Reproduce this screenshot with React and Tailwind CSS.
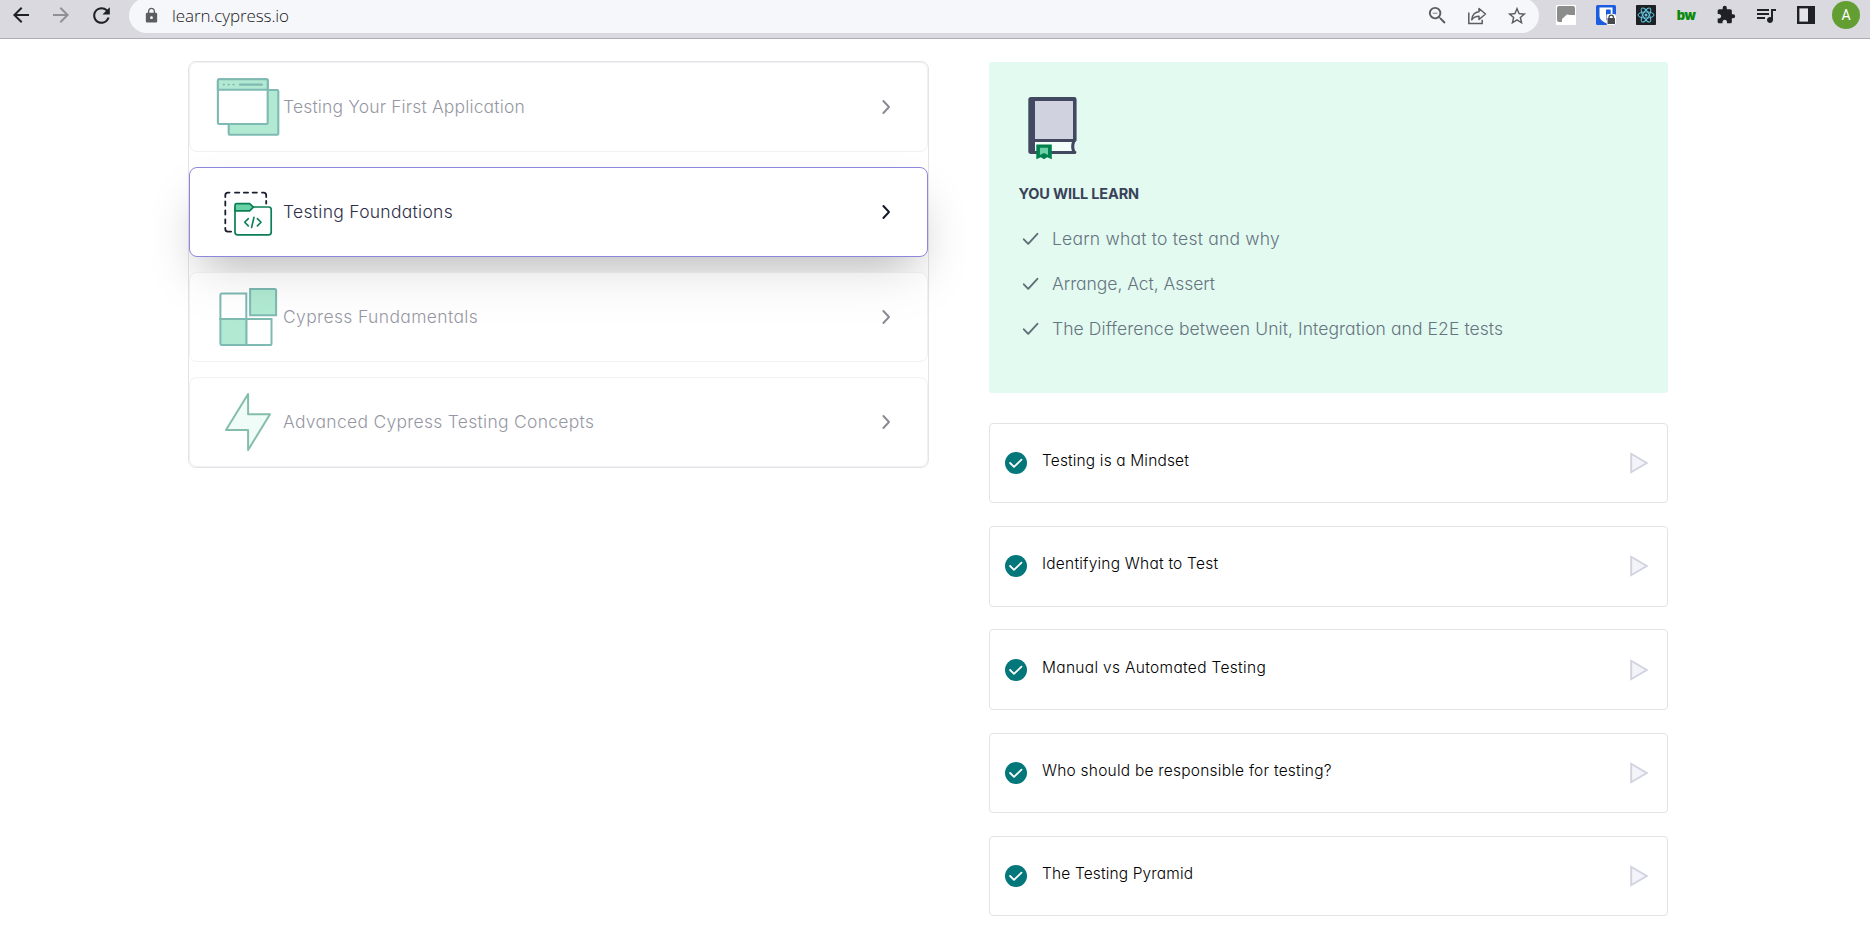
import {
  MdArrowBack,
  MdArrowForward,
  MdExtension,
  MdLock,
  MdQueueMusic,
  MdRefresh,
  MdStarBorder,
  MdZoomOut,
} from "react-icons/md";

const WindowsIcon = () => (
  <svg viewBox="213 63 70 88" className="h-[88px] w-[70px] shrink-0" fill="#65d5a7" stroke="#007769" strokeWidth="2.1">
    <rect x="228.7" y="90" width="49.6" height="44.8" rx="1.2" />
    <rect x="217.9" y="79.2" width="49.8" height="44.8" rx="1.2" fill="#fff" />
    <path d="M217.9 89.8V80.4a1.2 1.2 0 0 1 1.2-1.2h47.4a1.2 1.2 0 0 1 1.2 1.2v9.4Z" />
    <path d="M239.8 84.6H262" strokeLinecap="round" />
    <path d="M223.4 84.6h.8M228.3 84.6h.8M233.2 84.6h.8" strokeLinecap="round" strokeWidth="1.6" />
  </svg>
);

const FolderIcon = () => (
  <svg viewBox="213 168 70 88" className="h-[88px] w-[70px] shrink-0" fill="none" strokeLinecap="round" strokeLinejoin="round">
    <g stroke="#1b1e2e" strokeWidth="1.8">
      <path d="M225.3 197v-1.8a2.6 2.6 0 0 1 2.6-2.6h1.6M235 192.6h4.3M243.8 192.6h4.3M252.6 192.6h4.3M262 192.6h1.6a2.6 2.6 0 0 1 2.6 2.6v1.8M266.2 201v2.6" />
      <path d="M225.3 201.5v4M225.3 210.5v4M225.3 219.3v4M225.3 227.8v1.2a2.6 2.6 0 0 0 2.6 2.6h3.2" />
    </g>
    <g stroke="#0b7f55" strokeWidth="1.7">
      <path d="M235 208v24.2a2.6 2.6 0 0 0 2.6 2.6h31a2.6 2.6 0 0 0 2.6-2.6v-22.6a2.6 2.6 0 0 0-2.6-2.6h-15" fill="#fff" />
      <path d="M235 210.8v-5.6a1.6 1.6 0 0 1 1.6-1.6h13l3.8 3.5-3.8 3.7Z" fill="#69d3a7" />
      <path d="m248.3 218.6-3.6 3.7 3.6 3.6M257.4 218.6l3.6 3.7-3.6 3.6M254 217.2l-2.4 10.3" strokeWidth="1.6" />
    </g>
  </svg>
);

const BlocksIcon = () => (
  <svg viewBox="213 273 70 88" className="h-[88px] w-[70px] shrink-0" fill="#fff" stroke="#007769" strokeWidth="2">
    <path d="M220.4 319v-24.2a1.3 1.3 0 0 1 1.3-1.3h24.6V319Z" />
    <path d="M246.3 319h25.2v24.8a1.3 1.3 0 0 1-1.3 1.3h-23.9Z" />
    <path d="M220.4 319h25.9v26.1h-24.6a1.3 1.3 0 0 1-1.3-1.3Z" fill="#65d5a7" />
    <path d="M250.1 289h24.7a1.3 1.3 0 0 1 1.3 1.3v24.9h-26Z" fill="#65d5a7" />
  </svg>
);

const BoltIcon = () => (
  <svg viewBox="213 378 70 88" className="h-[88px] w-[70px] shrink-0" fill="#e3fbf0" stroke="#0b7f55" strokeWidth="2" strokeLinejoin="round">
    <path d="M248.1 394v20.2H270l-21.9 35.9V430H226Z" />
  </svg>
);

const Chevron = () => (
  <svg viewBox="0 0 10 16" className="mr-[36px] h-4 w-[10px]" fill="none" stroke="#14172a" strokeWidth="1.9">
    <path d="m2.4 2 5.6 6-5.6 6" strokeLinecap="round" strokeLinejoin="round" />
  </svg>
);

const BookIcon = () => (
  <svg viewBox="1019 92 72 72" className="h-[72px] w-[72px]">
    <path d="M1031 97h43.2a2.4 2.4 0 0 1 2.4 2.4v41.2l-1.6 2c-1 2.6-1 5.2 0 7.9l1.6 1.5-1 2H1031a2.7 2.7 0 0 1-2.7-2.7V99.7A2.7 2.7 0 0 1 1031 97Z" fill="#434861" />
    <path d="M1035 101h38v37.9h-38Z" fill="#d0d2e0" />
    <path d="M1035 142h36.9c-1 3-1 6 0 8.9H1035Z" fill="#f3fdf9" />
    <path d="M1036.3 144.4h15.5v14.8l-4.6-1.9-3.2 1.9-3.2-1.9-4.5 1.9Z" fill="#00814d" />
    <path d="M1039.9 147.8h8.1v7.2l-4-1.9-4.1 1.9Z" fill="#69d3a7" />
  </svg>
);

const DoneBadge = () => (
  <svg viewBox="0 0 22 22" className="h-[22px] w-[22px] shrink-0" fill="none">
    <circle cx="11" cy="11" r="11" fill="#04777b" />
    <path d="m5.1 11 3.9 3.8 7.5-7.2" stroke="#fff" strokeWidth="1.8" strokeLinecap="round" strokeLinejoin="round" />
  </svg>
);

const Play = () => (
  <svg viewBox="0 0 20 22" className="mr-[18px] h-[22px] w-5" fill="#f3f4fa" stroke="#d0d2e0" strokeWidth="1.9">
    <path d="M2.2 1.8v18.4L17.8 11Z" />
  </svg>
);

const courses = [
  { title: "Testing Your First Application", Icon: WindowsIcon, tracking: "tracking-[0.15px]" },
  { title: "Testing Foundations", Icon: FolderIcon, tracking: "tracking-[0.28px]", active: true },
  { title: "Cypress Fundamentals", Icon: BlocksIcon, tracking: "tracking-[0.36px]" },
  { title: "Advanced Cypress Testing Concepts", Icon: BoltIcon, tracking: "tracking-[0.28px]" },
];

const goals = [
  { text: "Learn what to test and why", tracking: "tracking-[0.21px]" },
  { text: "Arrange, Act, Assert", tracking: "tracking-[-0.047px]" },
  { text: "The Difference between Unit, Integration and E2E tests", tracking: "tracking-[0.077px]" },
];

const lessons = [
  { title: "Testing is a Mindset", tracking: "tracking-[0.147px]" },
  { title: "Identifying What to Test", tracking: "tracking-[0.225px]" },
  { title: "Manual vs Automated Testing", tracking: "tracking-[0.32px]" },
  { title: "Who should be responsible for testing?", tracking: "tracking-[0.23px]" },
  { title: "The Testing Pyramid", tracking: "tracking-[0.139px]" },
];

const Slot = ({ children }) => <div className="flex h-[30px] w-10 shrink-0 items-center justify-center">{children}</div>;

function Toolbar() {
  return (
    <header className="flex h-[39px] items-start border-b border-[#aeadb6] bg-[#d9d9df] text-[#1f2127]">
      <div className="flex w-[129px] shrink-0 pl-[1px]">
        <Slot><MdArrowBack size={24} /></Slot>
        <Slot><MdArrowForward size={24} color="#8f9096" /></Slot>
        <Slot><MdRefresh size={25} /></Slot>
      </div>
      <div className="-mt-0.5 flex h-[35px] w-[1410px] shrink-0 items-center rounded-full bg-[#f6f7fa] pr-[2px] pl-[14px]">
        <MdLock size={17} color="#5c5d62" />
        <div className="ml-[12px] flex-1 font-['Open_Sans',sans-serif] text-[17px] leading-6 font-light tracking-[-0.1px] text-[#16181d]">
          learn.cypress.io
        </div>
        <div className="flex text-[#5c5d62]">
          <Slot><MdZoomOut size={23} /></Slot>
          <Slot>
            <svg viewBox="0 0 20 18" className="h-[18px] w-5" fill="none" stroke="currentColor" strokeWidth="1.5">
              <path d="M1.8 5.5v11h13.4v-3.8" />
              <path d="M12 1.5v3.3c-4.3.4-6.8 3.4-7.3 8 1.9-2.6 4.1-3.6 7.3-3.6v3.3L18.5 7Z" strokeLinejoin="round" />
            </svg>
          </Slot>
          <Slot><MdStarBorder size={22} /></Slot>
        </div>
      </div>
      <div className="flex pl-[7px]">
        <Slot>
          <svg viewBox="0 0 20 20" className="h-5 w-5">
            <rect width="20" height="20" rx="1" fill="#fff" />
            <path d="M3 1h14a2 2 0 0 1 2 2v7h-4.500L11 9.500 6 14v3H3a2 2 0 0 1-2-2V3a2 2 0 0 1 2-2Z" fill="#8b8c8c" />
            <path d="m6 14.5 5.500-5v2H18V19H8v-2.800Z" fill="#fff" />
          </svg>
        </Slot>
        <Slot>
          <svg viewBox="0 0 20 20" className="h-5 w-5">
            <rect width="20" height="20" rx="1.5" fill="#1c5de0" />
            <path d="M3.5 2.5h13v8c0 4-3 6-6.5 7.5-3.5-1.5-6.5-3.5-6.5-7.5Z" fill="#fff" />
            <path d="M10 4.5h4.7v6c0 2.5-2 4-4.7 5.3Z" fill="#1c5de0" />
            <rect x="10.5" y="9" width="9.5" height="11" rx="1.5" fill="#fff" />
            <rect x="11.5" y="13" width="7.5" height="6" rx="0.6" fill="#48494d" />
            <path d="M13 13.5v-1.2a2.2 2.2 0 0 1 4.4 0v1.2" fill="none" stroke="#48494d" strokeWidth="1.3" />
          </svg>
        </Slot>
        <Slot>
          <svg viewBox="0 0 20 20" className="h-5 w-5" fill="none" stroke="#5fc6e0" strokeWidth="1">
            <rect width="20" height="20" rx="0.8" fill="#1d2125" stroke="none" />
            <ellipse cx="10" cy="10" rx="8" ry="3.1" />
            <ellipse cx="10" cy="10" rx="8" ry="3.1" transform="rotate(60 10 10)" />
            <ellipse cx="10" cy="10" rx="8" ry="3.1" transform="rotate(120 10 10)" />
            <circle cx="10" cy="10" r="1.5" fill="#5fc6e0" stroke="none" />
          </svg>
        </Slot>
        <Slot>
          <span className="font-[Inter,sans-serif] text-[13px] leading-4 font-black tracking-[-0.7px] text-[#0a8a0c]">bw</span>
        </Slot>
        <Slot><MdExtension size={20} /></Slot>
        <Slot><MdQueueMusic size={24} /></Slot>
        <Slot>
          <svg viewBox="0 0 18 18" className="h-[18px] w-[18px]">
            <rect x="1.2" y="1.2" width="15.6" height="15.6" fill="#e4e4e9" stroke="#1f2127" strokeWidth="2.4" />
            <rect x="11" y="1" width="6" height="16" fill="#1f2127" />
          </svg>
        </Slot>
        <Slot>
          <span className="flex h-7 w-7 items-center justify-center rounded-full bg-[#639e33] font-[Roboto,sans-serif] text-[14px] leading-none text-white">A</span>
        </Slot>
      </div>
    </header>
  );
}

function CourseCard({ title, Icon, tracking, active }) {
  const state = active
    ? "relative border-[#8d86dd] shadow-[0_25px_50px_-12px_rgba(0,0,0,0.28)]"
    : "relative border-[#e4e4e8] opacity-50";
  return (
    <div className={`flex h-[90px] items-center rounded-lg border bg-white pl-[23px] ${state}`}>
      <Icon />
      <span className={`flex-1 text-[17.5px] leading-6 font-light whitespace-nowrap text-[#2e3048] ${tracking}`}>{title}</span>
      <Chevron />
    </div>
  );
}

export default function App() {
  return (
    <div className="h-[928px] w-[1870px] overflow-hidden bg-white font-[Inter,sans-serif] [font-feature-settings:'cv11']">
      <Toolbar />
      <main className="flex items-start gap-[60px] pt-[22px] pl-[188px]">
        <section className="flex w-[741px] flex-col gap-[15px] rounded-lg border border-[#e4e4e8]">
          {courses.map((c) => (
            <CourseCard key={c.title} {...c} />
          ))}
        </section>

        <section className="w-[679px] pt-px">
          <div className="h-[330.5px] rounded-[3px] bg-[#e3faf0] pt-[30px] pl-[30px]">
            <BookIcon />
            <h2 className="mt-[20px] -ml-[0.5px] text-[14.5px] leading-5 font-bold tracking-[-0.15px] text-[#3a4259]">YOU WILL LEARN</h2>
            <ul className="mt-[23px] flex flex-col gap-[21px]">
              {goals.map((g) => (
                <li key={g.text} className="flex h-6 items-center">
                  <svg viewBox="0 0 18 14" className="ml-[2.5px] h-[14px] w-[18px]" fill="none" stroke="#5f6f78" strokeWidth="1.9">
                    <path d="m1.8 7.3 4.4 4.5L15.4 1.8" strokeLinecap="round" strokeLinejoin="round" />
                  </svg>
                  <span className={`ml-[12.5px] text-[17.5px] leading-6 font-light whitespace-nowrap text-[#66747f] ${g.tracking}`}>{g.text}</span>
                </li>
              ))}
            </ul>
          </div>

          <div className="mt-[30.6px] flex flex-col gap-[22.9px]">
            {lessons.map((l) => (
              <div key={l.title} className="flex h-[80.3px] items-center rounded-[4px] border border-[#e2e3e6] bg-white pl-[15px]">
                <DoneBadge />
                <span className={`ml-[15px] flex-1 pb-1 text-[15.5px] leading-5 font-light whitespace-nowrap text-black ${l.tracking}`}>{l.title}</span>
                <Play />
              </div>
            ))}
          </div>
        </section>
      </main>
    </div>
  );
}
